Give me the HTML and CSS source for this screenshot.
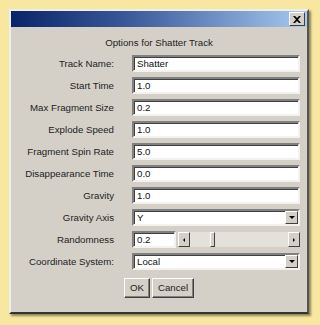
FILE: index.html
```html
<!DOCTYPE html>
<html lang="en">
<head>
<meta charset="utf-8">
<title>Options for Shatter Track</title>
<link rel="stylesheet" href="styles.css">
</head>
<body>

<div class="dialog">
  <div class="titlebar">
    <span class="close">
      <svg width="8" height="7" viewBox="0 0 8 7"><path d="M0 0h2l2 2 2-2h2L5 3.5 8 7H6L4 5 2 7H0l3-3.5z" fill="#000"/></svg>
    </span>
  </div>

  <div class="heading">Options for Shatter Track</div>

  <div class="form">
    <label>Track Name:</label>
    <div class="field">Shatter</div>

    <label>Start Time</label>
    <div class="field">1.0</div>

    <label>Max Fragment Size</label>
    <div class="field">0.2</div>

    <label>Explode Speed</label>
    <div class="field">1.0</div>

    <label>Fragment Spin Rate</label>
    <div class="field">5.0</div>

    <label>Disappearance Time</label>
    <div class="field">0.0</div>

    <label>Gravity</label>
    <div class="field">1.0</div>

    <label>Gravity Axis</label>
    <div class="field combo">Y<span class="drop"><i class="arrow-down"></i></span></div>

    <label>Randomness</label>
    <div class="slider-row">
      <div class="field small">0.2</div>
      <div class="scrollbar">
        <span class="sbtn"><i class="arrow-left"></i></span>
        <span class="track"><span class="thumb"></span></span>
        <span class="sbtn"><i class="arrow-right"></i></span>
      </div>
    </div>

    <label>Coordinate System:</label>
    <div class="field combo">Local<span class="drop"><i class="arrow-down"></i></span></div>
  </div>

  <div class="buttons">
    <span class="btn">OK</span>
    <span class="btn">Cancel</span>
  </div>
</div>

</body>
</html>
```

FILE: styles.css
```css
html, body {
  margin: 0;
  padding: 0;
}
body {
  background: #f8e7a1;
  font-family: "Liberation Sans", Arial, sans-serif;
  font-size: 9.7px;
  color: #222;
  width: 320px;
  height: 325px;
  padding: 9px 0 0 9px;
  box-sizing: border-box;
}

.dialog {
  width: 300px;
  height: 305px;
  box-sizing: border-box;
  background: #d4d0c8;
  border: 2px solid;
  border-color: #f0eee8 #555 #333 #f0eee8;
  box-shadow: 2px 2px 2px rgba(60,50,20,0.55);
}

.titlebar {
  height: 16px;
  background: linear-gradient(to right, #0a246a, #3a5a9a 40%, #a6caf0);
  display: flex;
  justify-content: flex-end;
  align-items: center;
  padding-right: 2px;
}
.close {
  width: 14px;
  height: 12px;
  background: #d4d0c8;
  border: 1px solid;
  border-color: #fff #404040 #404040 #fff;
  display: flex;
  align-items: center;
  justify-content: center;
}

.heading {
  text-align: center;
  padding-top: 9px;
  height: 19px;
  line-height: 14px;
}

.form {
  display: grid;
  grid-template-columns: 103px 168px;
  grid-auto-rows: 17px;
  column-gap: 18px;
  row-gap: 5px;
}
.form label {
  text-align: right;
  line-height: 17px;
  white-space: nowrap;
}

.field {
  background: #fff;
  border: 2px solid;
  border-color: #808080 #f4f2ee #f4f2ee #808080;
  box-shadow: inset 1px 1px 0 #404040;
  box-sizing: border-box;
  padding-left: 3px;
  line-height: 13px;
  color: #111;
  position: relative;
}
.combo .drop {
  position: absolute;
  right: 0;
  top: 0;
  width: 11px;
  height: 11px;
  background: #d4d0c8;
  border: 1px solid;
  border-color: #fff #404040 #404040 #fff;
  display: flex;
  align-items: center;
  justify-content: center;
}

.arrow-down {
  width: 0;
  height: 0;
  border-left: 3px solid transparent;
  border-right: 3px solid transparent;
  border-top: 3px solid #000;
}
.arrow-left {
  width: 0;
  height: 0;
  border-top: 2px solid transparent;
  border-bottom: 2px solid transparent;
  border-right: 2px solid #000;
}
.arrow-right {
  width: 0;
  height: 0;
  border-top: 2px solid transparent;
  border-bottom: 2px solid transparent;
  border-left: 2px solid #000;
}

.slider-row {
  display: flex;
  gap: 2px;
}
.field.small {
  width: 44px;
}
.scrollbar {
  flex: 1;
  display: flex;
  height: 15px;
  margin-top: 1px;
  background: #e4e1db;
}
.sbtn {
  width: 10px;
  height: 13px;
  background: #d4d0c8;
  border: 1px solid;
  border-color: #fff #404040 #404040 #fff;
  display: flex;
  align-items: center;
  justify-content: center;
}
.track {
  flex: 1;
  position: relative;
}
.thumb {
  position: absolute;
  left: 20px;
  top: 0;
  width: 3px;
  height: 13px;
  background: #d4d0c8;
  border: 1px solid;
  border-color: #fff #404040 #404040 #fff;
}

.buttons {
  display: flex;
  justify-content: center;
  gap: 2px;
  margin-top: 8px;
}
.btn {
  height: 18px;
  line-height: 18px;
  padding: 0 5px;
  border: 1px solid;
  border-color: #fff #404040 #404040 #fff;
  box-shadow: inset -1px -1px 0 #808080;
  color: #222;
}
```
